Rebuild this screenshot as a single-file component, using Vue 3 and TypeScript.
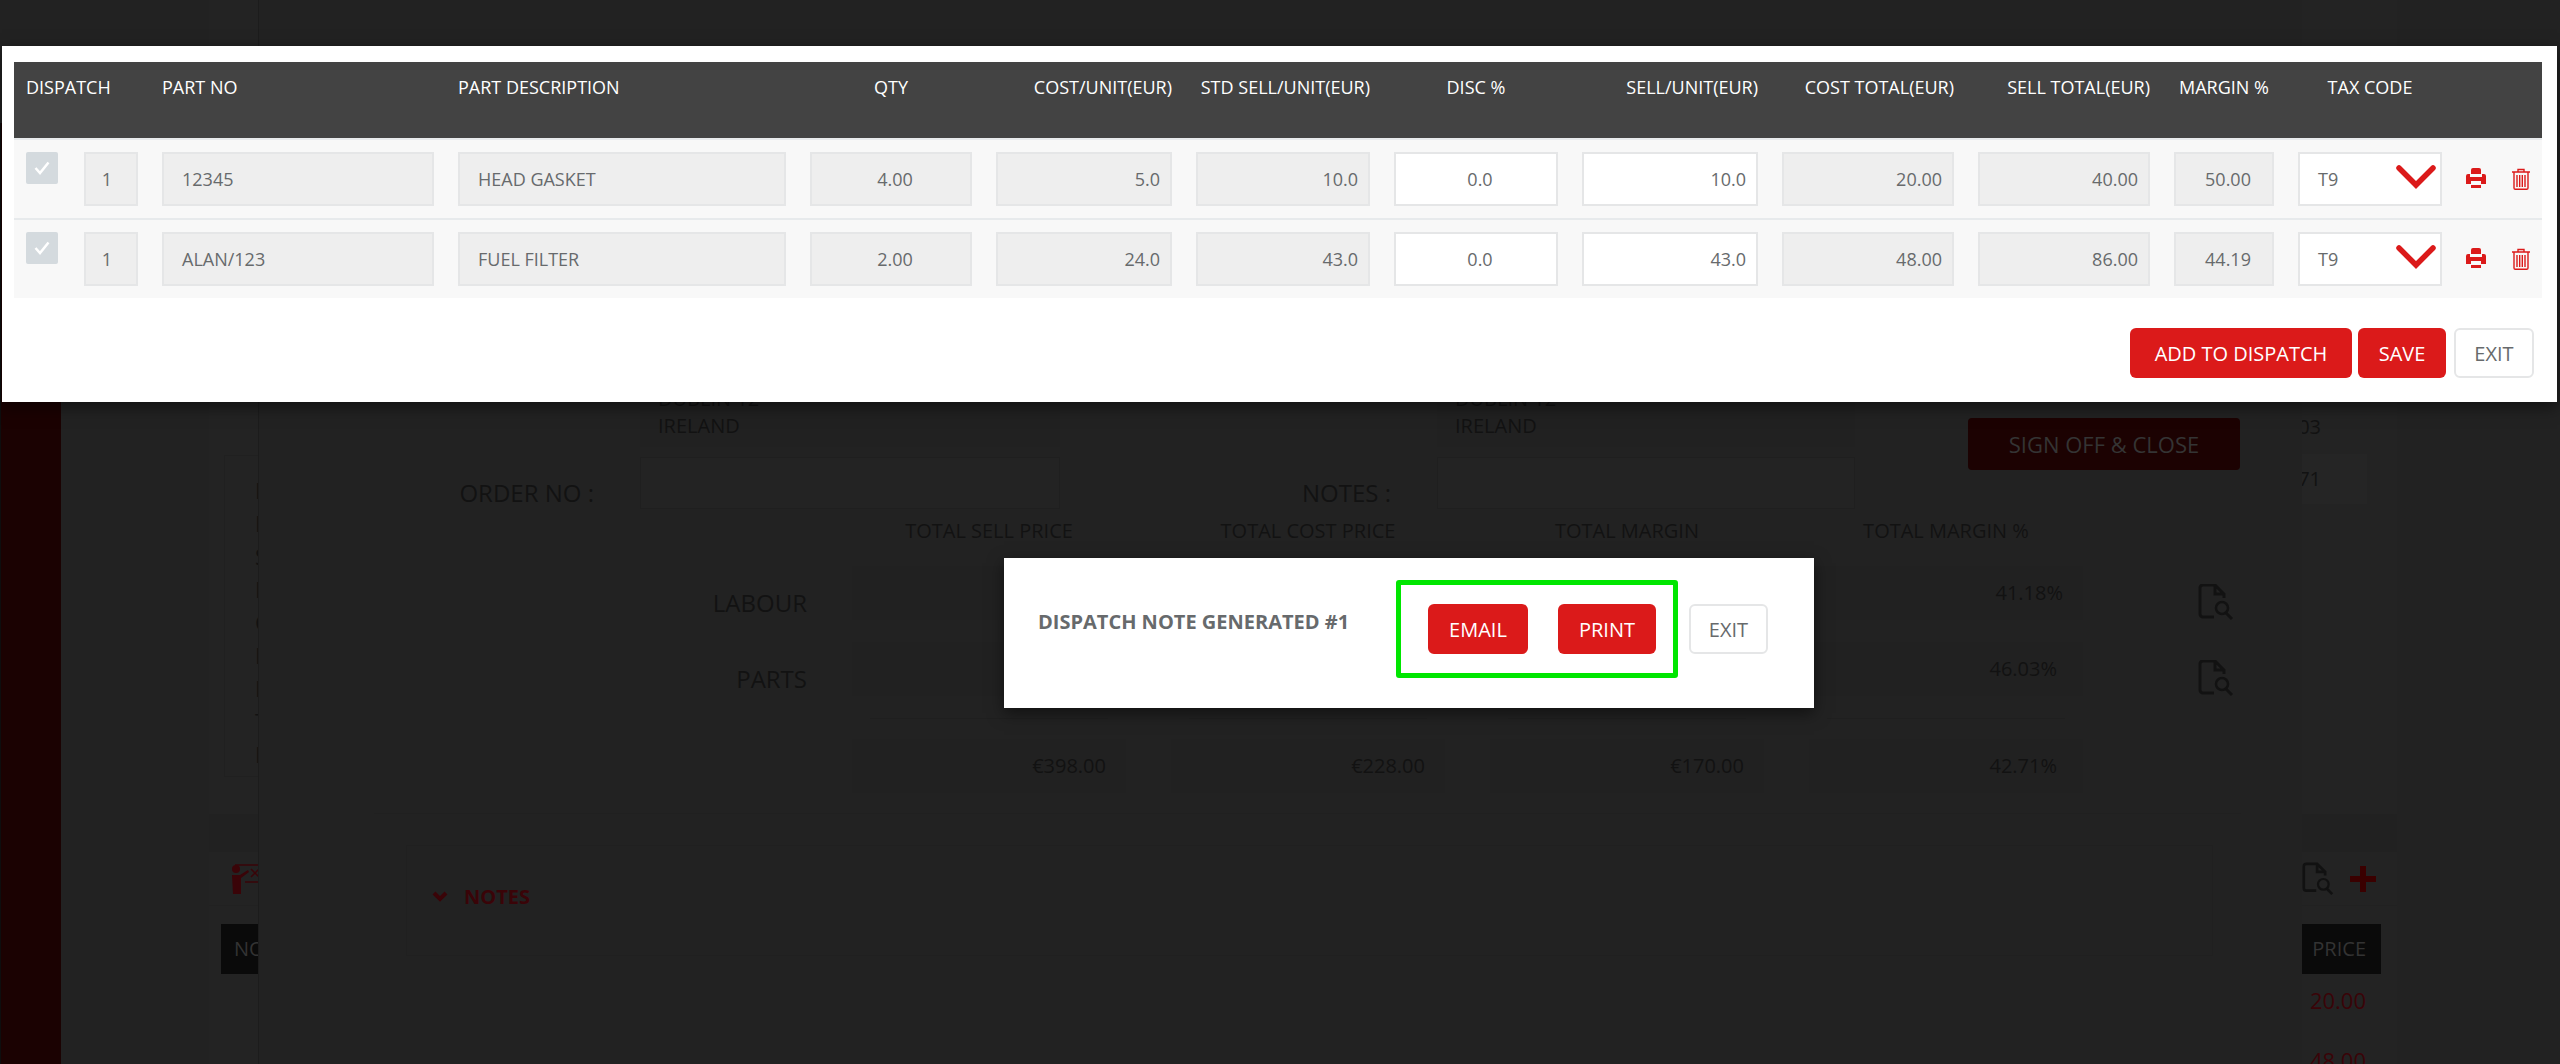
<script setup lang="ts">
interface Line {
  part: string
  desc: string
  qty: string
  cost: string
  std: string
  disc: string
  sell: string
  costTotal: string
  sellTotal: string
  margin: string
}

const heads = [
  { key: 'dispatch', label: 'DISPATCH', cls: '' },
  { key: 'part', label: 'PART NO', cls: '' },
  { key: 'desc', label: 'PART DESCRIPTION', cls: '' },
  { key: 'qty', label: 'QTY', cls: 'mid' },
  { key: 'cost', label: 'COST/UNIT(EUR)', cls: 'end' },
  { key: 'std', label: 'STD SELL/UNIT(EUR)', cls: 'end' },
  { key: 'disc', label: 'DISC %', cls: 'mid' },
  { key: 'sell', label: 'SELL/UNIT(EUR)', cls: 'end' },
  { key: 'costTotal', label: 'COST TOTAL(EUR)', cls: 'end' },
  { key: 'sellTotal', label: 'SELL TOTAL(EUR)', cls: 'end' },
  { key: 'margin', label: 'MARGIN %', cls: 'mid' },
  { key: 'tax', label: 'TAX CODE', cls: 'mid' }
]

const lines: Line[] = [
  { part: '12345', desc: 'HEAD GASKET', qty: '4.00', cost: '5.0', std: '10.0', disc: '0.0', sell: '10.0', costTotal: '20.00', sellTotal: '40.00', margin: '50.00' },
  { part: 'ALAN/123', desc: 'FUEL FILTER', qty: '2.00', cost: '24.0', std: '43.0', disc: '0.0', sell: '43.0', costTotal: '48.00', sellTotal: '86.00', margin: '44.19' }
]

const letters = ['I', 'F', 'S', 'F', 'C', 'D', 'I', 'T', 'E']
const totalHeads = ['TOTAL SELL PRICE', 'TOTAL COST PRICE', 'TOTAL MARGIN', 'TOTAL MARGIN %']
const labourRows = [
  { name: 'LABOUR', pct: '41.18%', cls: '' },
  { name: 'PARTS', pct: '46.03%', cls: 'inset' }
]
const sums = ['€398.00', '€228.00', '€170.00', '42.71%']
const prices = ['20.00', '48.00']
</script>

<template>
  <div class="page">
    <div class="base">
      <aside class="sidebar"></aside>
      <div class="panel">
        <div class="head">
          <span class="tick">
            <svg width="24" height="20" viewBox="0 0 24 20"><path d="M3 10l6 6L21 3" fill="none" stroke="#3c3c3c" stroke-width="5" /></svg>
          </span>
          <div class="squares">
            <span class="square"><svg width="30" height="30" viewBox="0 0 30 30"><path d="M15 2L2 16h26z" fill="#3a3a3a" /></svg></span>
            <span class="square"><svg width="30" height="30" viewBox="0 0 30 30"><path d="M8 6h14v10H8z" fill="#3a3a3a" /></svg></span>
            <span class="square"><svg width="34" height="30" viewBox="0 0 34 30"><path d="M2 8h26v14H2z" fill="#3a3a3a" /></svg></span>
          </div>
        </div>
        <div class="info">
          <div class="info-card">
            <div v-for="(l, i) in letters" :key="i">{{ l }}</div>
          </div>
          <div class="info-boxes">
            <div class="info-box">03</div>
            <div class="info-box alt">71</div>
          </div>
        </div>
        <div class="tools">
          <svg class="teach" width="40" height="30" viewBox="0 0 40 30">
            <circle cx="5" cy="5" r="4" fill="#3a0408" />
            <path d="M1 11h8l8-5 1 2-8 6v16H2z" fill="#3a0408" />
            <path d="M4 1h34v17H14" fill="none" stroke="#3a0408" stroke-width="1.5" />
            <path d="M20 5l8 8M28 5l-8 8" stroke="#3a0408" stroke-width="1.5" />
          </svg>
          <div class="tools-end">
            <svg width="32" height="34" viewBox="0 0 36 36">
              <path d="M16 31H5a3 3 0 0 1-3-3V4a3 3 0 0 1 3-3h12l9 9v4M17 1v9h9" fill="none" stroke="#111" stroke-width="3" />
              <circle cx="24" cy="24" r="6" fill="none" stroke="#111" stroke-width="2.5" />
              <path d="M28 29l6 6" stroke="#111" stroke-width="3" />
            </svg>
            <svg width="26" height="26" viewBox="0 0 26 26"><path d="M10 0h6v10h10v6H16v10h-6V16H0v-6h10z" fill="#3a0000" /></svg>
          </div>
        </div>
        <div class="parts">
          <div class="parts-head"><span>NO</span><span>PRICE</span></div>
          <div v-for="p in prices" :key="p" class="parts-row">{{ p }}</div>
        </div>
      </div>
    </div>

    <section class="job">
      <div class="form">
        <div></div>
        <div class="ghost-field tall">
          <div>DUBLIN 12</div>
          <div>IRELAND</div>
        </div>
        <div></div>
        <div class="ghost-field tall">
          <div>DUBLIN 12</div>
          <div>IRELAND</div>
        </div>
        <div class="sign-off">SIGN OFF &amp; CLOSE</div>
        <div class="form-label">ORDER NO :</div>
        <div class="ghost-field outlined"></div>
        <div class="form-label">NOTES :</div>
        <div class="ghost-field outlined"></div>
      </div>

      <div class="totals">
        <div></div>
        <div v-for="h in totalHeads" :key="h" class="total-head">{{ h }}</div>
        <div></div>

        <template v-for="row in labourRows" :key="row.name">
          <div class="total-label">{{ row.name }}</div>
          <div class="ghost-box"></div>
          <div class="ghost-box"></div>
          <div class="ghost-box"></div>
          <div class="ghost-box" :class="row.cls">{{ row.pct }}</div>
          <svg class="doc" width="36" height="36" viewBox="0 0 36 36">
            <path d="M16 33H5a3 3 0 0 1-3-3V4a3 3 0 0 1 3-3h12l9 9v4M17 1v9h9" fill="none" stroke="#121212" stroke-width="3" />
            <circle cx="24" cy="24" r="6" fill="none" stroke="#121212" stroke-width="2.5" />
            <path d="M28 29l6 6" stroke="#121212" stroke-width="3" />
          </svg>
        </template>

        <div></div>
        <div v-for="n in 4" :key="n" class="rule-cell"></div>
        <div></div>

        <div></div>
        <div v-for="(s, i) in sums" :key="s" class="ghost-box sum" :class="{ inset: i === 3 }">{{ s }}</div>
        <div></div>
      </div>

      <div class="job-rule"></div>
      <div class="notes">
        <svg width="16" height="12" viewBox="0 0 16 12"><path d="M2 2l6 6 6-6" fill="none" stroke="#3a0408" stroke-width="4" /></svg>
        <span>NOTES</span>
      </div>
    </section>

    <section class="dialog-lines">
      <div class="table-head cols">
        <div v-for="h in heads" :key="h.key" :class="h.cls">{{ h.label }}</div>
      </div>
      <div v-for="line in lines" :key="line.part" class="table-row cols">
        <div class="dispatch-cell">
          <span class="check">
            <svg width="18" height="16" viewBox="0 0 18 16"><path d="M2.500 8l4.500 5L15.500 2.500" fill="none" stroke="#fff" stroke-width="2.500" /></svg>
          </span>
          <div class="field mid qty-one">1</div>
        </div>
        <div class="field">{{ line.part }}</div>
        <div class="field">{{ line.desc }}</div>
        <div class="field mid">{{ line.qty }}</div>
        <div class="field end">{{ line.cost }}</div>
        <div class="field end">{{ line.std }}</div>
        <div class="field open mid">{{ line.disc }}</div>
        <div class="field open end">{{ line.sell }}</div>
        <div class="field end">{{ line.costTotal }}</div>
        <div class="field end">{{ line.sellTotal }}</div>
        <div class="field mid">{{ line.margin }}</div>
        <div class="field open tax">
          <span>T9</span>
          <svg width="40" height="24" viewBox="0 0 40 24"><path d="M3 3l17 17L37 3" fill="none" stroke="#db1a1a" stroke-width="5.500" stroke-linecap="round" /></svg>
        </div>
        <div class="row-icons">
          <svg width="20" height="20" viewBox="0 0 20 20">
            <path fill="#db1a1a" fill-rule="evenodd" d="M7 0h6a2 2 0 0 1 2 2v4H5V2a2 2 0 0 1 2-2zM2 6h2v3h12V6h2a2 2 0 0 1 2 2v8h-5v-3H5v3H0V8a2 2 0 0 1 2-2zM5 17h10v3H5z" />
          </svg>
          <svg width="18" height="22" viewBox="0 0 18 22">
            <path fill="none" stroke="#db1a1a" stroke-width="1.400" d="M0 4h18M6 4V1.500h6V4M2 4v16a1.300 1.300 0 0 0 1.300 1.300h11.400A1.300 1.300 0 0 0 16 20V4M5 7v12M7.700 7v12M10.300 7v12M13 7v12" />
          </svg>
        </div>
      </div>
      <div class="dialog-actions">
        <button class="btn red">ADD TO DISPATCH</button>
        <button class="btn red save">SAVE</button>
        <button class="btn plain">EXIT</button>
      </div>
    </section>

    <section class="dialog-note">
      <div class="note-title">DISPATCH NOTE GENERATED #1</div>
      <div class="green-box">
        <button class="btn red email">EMAIL</button>
        <button class="btn red print">PRINT</button>
      </div>
      <button class="btn plain note-exit">EXIT</button>
    </section>
  </div>
</template>

<style scoped>
.page {
  position: relative;
  width: 2560px;
  height: 1064px;
  overflow: hidden;
  background: #222;
  font-family: "Open Sans", "Liberation Sans", sans-serif;
  color: #121212;
}

/* dimmed page behind the dialogs */
.base {
  display: flex;
  height: 100%;
}

.sidebar {
  width: 60px;
  margin-top: 123px;
  background: #1b0202;
  border-left: 1px solid #0e0e0e;
}

.panel {
  width: 2188px;
  margin-left: 148px;
  background: #232323;
}

.head {
  display: flex;
  justify-content: space-between;
  align-items: flex-start;
  height: 402px;
  padding: 16px 102px 0 217px;
  box-sizing: border-box;
}

.tick {
  display: flex;
  align-items: center;
  justify-content: center;
  width: 37px;
  height: 37px;
  border-radius: 50%;
  background: #1c0202;
}

.squares {
  display: flex;
  gap: 6px;
  margin-top: 8px;
}

.square {
  display: flex;
  justify-content: center;
  width: 68px;
  height: 60px;
  padding-top: 14px;
  box-sizing: border-box;
  background: #1e0303;
}

.info {
  display: flex;
  justify-content: space-between;
  height: 412px;
  padding: 0 30px 0 15px;
  box-sizing: border-box;
}

.info-card {
  width: 300px;
  height: 322px;
  margin-top: 53px;
  padding: 18px 0 0 30px;
  box-sizing: border-box;
  border: 1px solid #202020;
  font-size: 22px;
  line-height: 33px;
}

.info-box {
  width: 166px;
  height: 50px;
  padding-right: 46px;
  box-sizing: border-box;
  text-align: right;
  font-size: 20px;
  line-height: 50px;
}

.info-box.alt {
  margin-top: 2px;
  background: #252525;
}

.tools {
  display: flex;
  justify-content: space-between;
  align-items: center;
  height: 53px;
  margin-top: 38px;
  padding: 0 21px 0 22px;
  box-shadow: 0 -38px 0 #212121;
  border-bottom: 1px solid #212121;
}

.tools-end {
  display: flex;
  align-items: center;
  gap: 16px;
}

.parts {
  margin: 18px 16px 0 12px;
}

.parts-head {
  display: flex;
  justify-content: space-between;
  height: 50px;
  padding: 0 15px 0 13px;
  background: #0a0a0a;
  color: #333;
  font-size: 20px;
  line-height: 50px;
}

.parts-row {
  height: 60px;
  padding-right: 15px;
  text-align: right;
  color: #3a0408;
  font-size: 22px;
  line-height: 52px;
}

/* job dialog, also dimmed */
.job {
  position: absolute;
  top: 0;
  left: 258px;
  width: 2044px;
  height: 1064px;
  padding-top: 340px;
  box-sizing: border-box;
  background: #222;
  border-left: 1px solid #1c1c1c;
}

.form {
  display: grid;
  grid-template-columns: 381px 420px 377px 418px 385px;
  grid-template-rows: 107px 52px;
  row-gap: 10px;
}

.ghost-field {
  box-sizing: border-box;
  background: #212121;
  font-size: 20px;
  line-height: 27px;
}

.ghost-field.tall {
  display: flex;
  flex-direction: column;
  justify-content: flex-end;
  padding: 0 18px 8px;
}

.ghost-field.outlined {
  border: 1px solid #1f1f1f;
  background: #232323;
}

.sign-off {
  align-self: end;
  width: 272px;
  height: 52px;
  margin: 0 0 -23px 113px;
  border-radius: 4px;
  background: #1c0202;
  color: #343434;
  font-size: 22px;
  line-height: 52px;
  text-align: center;
}

.form-label {
  padding-right: 46px;
  text-align: right;
  font-size: 24px;
  line-height: 72px;
  height: 52px;
}

.totals {
  display: grid;
  grid-template-columns: 548px repeat(4, 274px) 36px;
  column-gap: 45px;
  row-gap: 22px;
}

.total-head {
  height: 35px;
  display: flex;
  align-items: flex-end;
  justify-content: center;
  font-size: 20px;
  line-height: 27px;
}

.total-label {
  align-self: end;
  padding-right: 0;
  text-align: right;
  font-size: 24px;
  line-height: 34px;
}

.ghost-box {
  height: 54px;
  padding-right: 20px;
  box-sizing: border-box;
  background: #212121;
  text-align: right;
  font-size: 20px;
  line-height: 54px;
}

.ghost-box.inset {
  padding-right: 26px;
}

.ghost-box.sum {
  margin-top: -2px;
}

.doc {
  align-self: end;
  margin-left: 70px;
}

.rule-cell {
  height: 0;
  margin: 0 18px;
  border-top: 1px solid #1f1f1f;
}

.job-rule {
  width: 1867px;
  height: 1px;
  margin: 20px 0 0 115px;
  background: #202020;
}

.notes {
  display: flex;
  align-items: center;
  gap: 16px;
  width: 1807px;
  height: 111px;
  margin: 31px 0 0 147px;
  padding: 0 0 8px 25px;
  box-sizing: border-box;
  border: 1px solid #202020;
  color: #3a0408;
  font-size: 20px;
  font-weight: 700;
}

/* line items dialog */
.dialog-lines {
  position: absolute;
  top: 46px;
  left: 2px;
  width: 2555px;
  height: 356px;
  padding: 16px 15px 0 12px;
  box-sizing: border-box;
  background: #fff;
  box-shadow: 0 5px 15px rgba(0, 0, 0, 0.5);
}

.cols {
  display: grid;
  grid-template-columns: 112px 272px 328px 162px 176px 174px 164px 176px 172px 172px 100px 144px 1fr;
  column-gap: 24px;
  padding-left: 12px;
}

.table-head {
  height: 76px;
  padding-top: 12px;
  box-sizing: border-box;
  background: #434343;
  color: #fff;
  font-size: 18px;
  line-height: 26px;
}

.table-head .mid {
  text-align: center;
}

.table-head .end {
  text-align: right;
}

.table-row {
  height: 78px;
  align-items: start;
  padding-top: 12px;
  box-sizing: border-box;
  background: #f8f8f8;
  border-top: 2px solid #e7eaec;
  height: 80px;
}

.table-row:last-of-type {
  border-bottom: 0;
}

.dispatch-cell {
  display: flex;
  gap: 26px;
}

.check {
  display: flex;
  align-items: center;
  justify-content: center;
  flex: none;
  width: 32px;
  height: 32px;
  border-radius: 2px;
  background: #d4dade;
}

.field {
  height: 54px;
  padding: 0 10px 0 18px;
  box-sizing: border-box;
  border: 2px solid #e5e6e7;
  background: #eee;
  color: #676a6c;
  font-size: 18px;
  line-height: 50px;
  white-space: nowrap;
}

.field.mid {
  text-align: center;
}

.field.end {
  text-align: right;
}

.field.open {
  background: #fff;
}

.qty-one {
  width: 54px;
  padding: 0 8px 0 0;
}

.tax {
  display: flex;
  justify-content: space-between;
  align-items: center;
  padding-right: 4px;
}

.tax svg {
  margin-top: -4px;
}

.row-icons {
  display: flex;
  align-items: flex-start;
  gap: 26px;
  padding-top: 16px;
}

.dialog-actions {
  display: flex;
  justify-content: flex-end;
  margin-top: 30px;
  padding-right: 8px;
}

.btn {
  height: 50px;
  padding: 0;
  border: 0;
  border-radius: 6px;
  font-family: inherit;
  font-size: 20px;
  box-sizing: border-box;
}

.btn.red {
  width: 222px;
  background: #db1a1a;
  color: #fff;
}

.btn.save {
  width: 88px;
  margin-left: 6px;
}

.btn.plain {
  width: 80px;
  margin-left: 8px;
  border: 2px solid #e5e6e7;
  background: #fff;
  color: #676a6c;
}

/* note dialog */
.dialog-note {
  position: absolute;
  top: 558px;
  left: 1004px;
  display: flex;
  align-items: flex-start;
  width: 810px;
  height: 150px;
  padding: 22px 0 0 34px;
  box-sizing: border-box;
  background: #fff;
  box-shadow: 0 5px 15px rgba(0, 0, 0, 0.5);
}

.note-title {
  width: 358px;
  margin-top: 27px;
  color: #676a6c;
  font-size: 20px;
  line-height: 30px;
  font-weight: 700;
  white-space: nowrap;
}

.green-box {
  display: flex;
  gap: 30px;
  width: 282px;
  height: 98px;
  padding: 19px 0 0 27px;
  box-sizing: border-box;
  border: 5.500px solid #00e600;
  border-radius: 3px;
}

.btn.email {
  width: 100px;
}

.btn.print {
  width: 98px;
}

.btn.note-exit {
  width: 79px;
  margin: 24px 0 0 11px;
}
</style>

<style>
html, body {
  margin: 0;
  background: #222;
}
</style>
